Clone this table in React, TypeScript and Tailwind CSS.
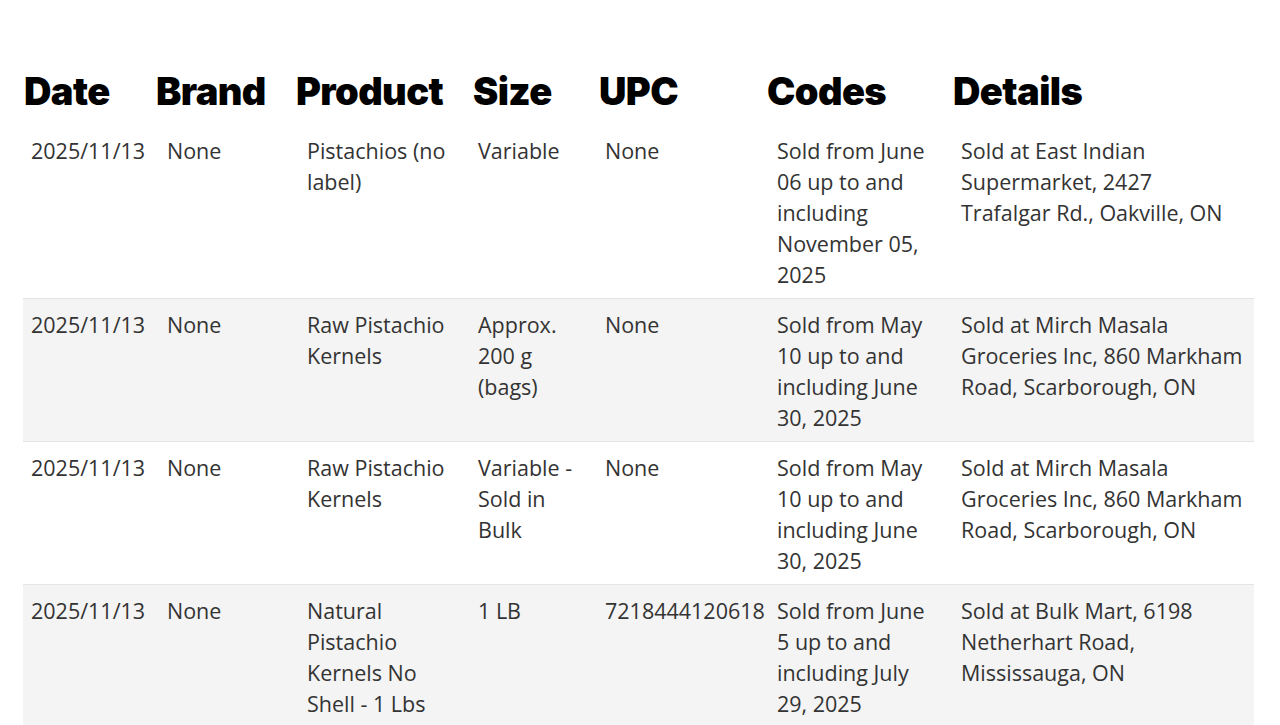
const headers = [
  { label: "Date", w: "w-[132px]" },
  { label: "Brand", w: "w-[140px]" },
  { label: "Product", w: "w-[177px]" },
  { label: "Size", w: "w-[126px]" },
  { label: "UPC", w: "w-[168px]" },
  { label: "Codes", w: "w-[186px]" },
  { label: "Details", w: "flex-1" },
];

// right padding per column (codes column wraps a little earlier)
const cellPad = ["pr-[6px]", "pr-[8px]", "pr-[8px]", "pr-[8px]", "pr-[4px]", "pr-[14px]", "pr-[8px]"];

const rows = [
  {
    date: "2025/11/13",
    brand: "None",
    product: "Pistachios (no label)",
    size: "Variable",
    upc: "None",
    codes: "Sold from June 06 up to and including November 05, 2025",
    details: "Sold at East Indian Supermarket, 2427 Trafalgar Rd., Oakville, ON",
  },
  {
    date: "2025/11/13",
    brand: "None",
    product: "Raw Pistachio Kernels",
    size: "Approx. 200 g (bags)",
    upc: "None",
    codes: "Sold from May 10 up to and including June 30, 2025",
    details: "Sold at Mirch Masala Groceries Inc, 860 Markham Road, Scarborough, ON",
  },
  {
    date: "2025/11/13",
    brand: "None",
    product: "Raw Pistachio Kernels",
    size: "Variable - Sold in Bulk",
    upc: "None",
    codes: "Sold from May 10 up to and including June 30, 2025",
    details: "Sold at Mirch Masala Groceries Inc, 860 Markham Road, Scarborough, ON",
  },
  {
    date: "2025/11/13",
    brand: "None",
    product: "Natural Pistachio Kernels No Shell - 1 Lbs",
    size: "1 LB",
    upc: "7218444120618",
    codes: "Sold from June 5 up to and including July 29, 2025",
    details: "Sold at Bulk Mart, 6198 Netherhart Road, Mississauga, ON",
  },
];

export default function App() {
  return (
    <div className="min-h-screen bg-white pl-[23px] pr-[26px] pt-[70px]">
      <div className="flex font-['Inter',sans-serif] text-[38px] font-black leading-[42px] tracking-[-0.6px] text-black">
        {headers.map((h) => (
          <div key={h.label} className={`${h.w} pl-[1px]`}>
            {h.label}
          </div>
        ))}
      </div>
      <table className="mt-[13px] w-full table-fixed border-collapse font-['Open_Sans',sans-serif] text-[21.5px] leading-[31px] text-[#333333]">
        <colgroup>
          <col className="w-[136px]" />
          <col className="w-[140px]" />
          <col className="w-[171px]" />
          <col className="w-[127px]" />
          <col className="w-[172px]" />
          <col className="w-[184px]" />
          <col />
        </colgroup>
        <tbody>
          {rows.map((r, i) => (
            <tr
              key={i}
              className={`align-top ${i > 0 ? "border-t border-[#e4e4e4]" : ""} ${i % 2 === 1 ? "bg-[#f4f4f4]" : "bg-white"}`}
            >
              {[r.date, r.brand, r.product, r.size, r.upc, r.codes, r.details].map((c, j) => (
                <td key={j} className={`pl-[8px] ${cellPad[j]} pt-[10px] pb-[8px]`}>
                  {c}
                </td>
              ))}
            </tr>
          ))}
        </tbody>
      </table>
    </div>
  );
}
